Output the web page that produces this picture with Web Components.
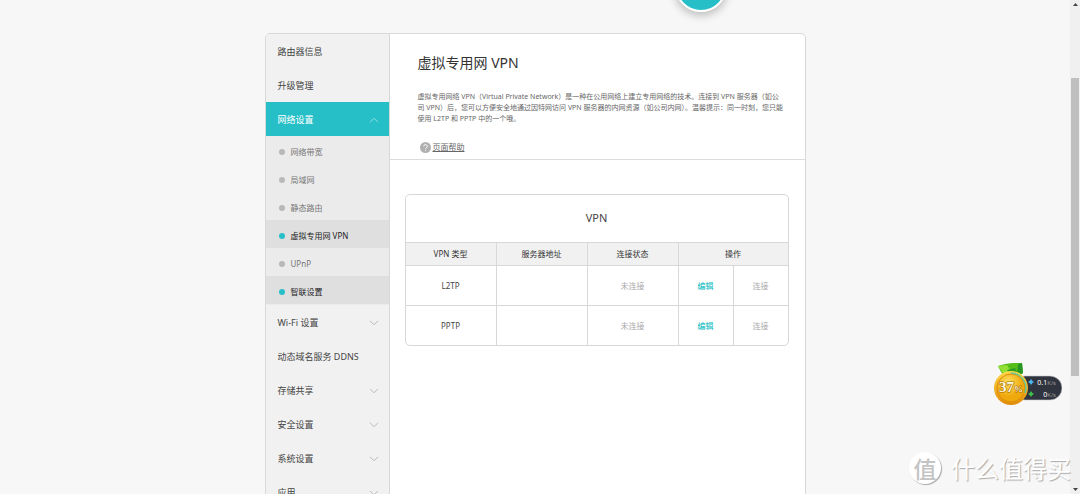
<!DOCTYPE html>
<html lang="zh-CN">
<head>
<meta charset="utf-8">
<title>虚拟专用网 VPN</title>
<style>
  html, body { margin: 0; height: 100%; overflow: hidden; }
  body { background: #f7f7f7; color: #444; font-family: "Noto Sans", "Noto Sans CJK SC", sans-serif; font-size: 9px; }
</style>
</head>
<body>
<router-app></router-app>
<script>
const define = (name, html) => {
  const template = document.createElement('template');
  template.innerHTML = html;
  customElements.define(name, class extends HTMLElement {
    connectedCallback() {
      if (this.shadowRoot) return;
      this.attachShadow({ mode: 'open' }).append(template.content.cloneNode(true));
    }
  });
};

define('nav-item', `
<style>
  :host { display: block; }
  a { display: flex; align-items: center; justify-content: space-between; box-sizing: border-box; height: 34px; padding: 2px 10px 0 12px; color: #444; text-decoration: none; font-size: 9px; line-height: 16px; }
  svg { display: none; width: 10px; height: 6px; fill: none; stroke: #bbb; }
  :host([expandable]) svg { display: block; }
  :host([open]) a { background: #27bfc7; color: #fff; }
  :host([open]) svg { transform: rotate(180deg); stroke: #8fdfe3; }
</style>
<a href="#"><slot></slot><svg viewBox="0 0 10 6"><path d="M1 .8 5 4.800 9 .8"/></svg></a>
`);

define('nav-subitem', `
<style>
  :host { display: block; --dot: #b9b9b9; }
  a { display: flex; align-items: center; gap: 6px; box-sizing: border-box; height: 28px; padding: 3px 0 0 13px; color: #777; text-decoration: none; font-size: 8px; line-height: 14px; }
  i { width: 6px; height: 6px; border-radius: 50%; background: var(--dot); }
  :host([marked]) { --dot: #27bfc7; background: #dfdfdf; }
  :host([marked]) a { color: #222; }
</style>
<a href="#"><i></i><span><slot></slot></span></a>
`);

define('side-nav', `
<style>
  :host { display: block; background: #f1f1f1; border-right: 1px solid #d8d8d8; }
  .sub { background: #ebebeb; padding-bottom: 1px; }
</style>
<nav aria-label="设置">
  <nav-item>路由器信息</nav-item>
  <nav-item>升级管理</nav-item>
  <nav-item expandable open>网络设置</nav-item>
  <div class="sub">
    <nav-subitem>网络带宽</nav-subitem>
    <nav-subitem>局域网</nav-subitem>
    <nav-subitem>静态路由</nav-subitem>
    <nav-subitem marked>虚拟专用网 VPN</nav-subitem>
    <nav-subitem>UPnP</nav-subitem>
    <nav-subitem marked>智联设置</nav-subitem>
  </div>
  <nav-item expandable>Wi-Fi 设置</nav-item>
  <nav-item>动态域名服务 DDNS</nav-item>
  <nav-item expandable>存储共享</nav-item>
  <nav-item expandable>安全设置</nav-item>
  <nav-item expandable>系统设置</nav-item>
  <nav-item expandable>应用</nav-item>
</nav>
`);

define('page-intro', `
<style>
  :host { display: block; padding: 18px 20px 5px 28px; border-bottom: 1px solid #dcdcdc; }
  h1 { margin: 0 0 17px; font-size: 14px; line-height: 22px; font-weight: 400; color: #333; }
  p { margin: 0 0 16px; font-size: 7px; line-height: 11px; color: #666; }
  a { display: flex; align-items: center; gap: 2px; padding-left: 2px; font-size: 8px; line-height: 14px; color: #666; }
  svg { width: 11px; height: 11px; }
</style>
<h1>虚拟专用网 VPN</h1>
<p>虚拟专用网络 VPN（Virtual Private Network）是一种在公用网络上建立专用网络的技术。连接到 VPN 服务器（如公<br>司 VPN）后，您可以方便安全地通过因特网访问 VPN 服务器的内网资源（如公司内网）。温馨提示：同一时刻，您只能<br>使用 L2TP 和 PPTP 中的一个哦。</p>
<a href="#"><svg viewBox="0 0 11 11"><circle cx="5.5" cy="5.5" r="5.5" fill="#b0b0b0"/><path d="M3.7 4.3a1.8 1.7 0 1 1 2.6 1.5q-.8.4-.8 1.2" fill="none" stroke="#fff" stroke-width=".9"/><circle cx="5.5" cy="8.5" r=".6" fill="#fff"/></svg><span>页面帮助</span></a>
`);

define('vpn-table', `
<style>
  :host { display: block; border: 1px solid #d8d8d8; border-radius: 5px; overflow: hidden; background: #fff; }
  table { width: 100%; table-layout: fixed; border-collapse: separate; border-spacing: 0; font-size: 8px; line-height: 12px; }
  caption { box-sizing: border-box; height: 47px; padding-bottom: 2px; line-height: 45px; font-size: 11px; color: #444; }
  .kind { width: 90px; }
  .wide { width: 91px; }
  .edit { width: 55px; }
  th, td { box-sizing: border-box; padding: 0; text-align: center; font-weight: 400; border-top: 1px solid #d8d8d8; border-left: 1px solid #d8d8d8; }
  th:first-child { border-left: 0; }
  thead th { height: 23px; background: #f1f1f1; color: #333; }
  tbody th, td { height: 40px; }
  td { color: #aaa; }
  button { padding: 0; border: 0; background: none; font: inherit; line-height: 12px; color: #aaa; }
  .go { color: #27bfc7; font-weight: 500; }
</style>
<table>
  <caption>VPN</caption>
  <colgroup><col class="kind"><col class="wide"><col class="wide"><col class="edit"><col></colgroup>
  <thead><tr><th scope="col">VPN 类型</th><th scope="col">服务器地址</th><th scope="col">连接状态</th><th scope="colgroup" colspan="2">操作</th></tr></thead>
  <tbody>
    <tr><th scope="row">L2TP</th><td></td><td>未连接</td><td><button class="go">编辑</button></td><td><button disabled>连接</button></td></tr>
    <tr><th scope="row">PPTP</th><td></td><td>未连接</td><td><button class="go">编辑</button></td><td><button disabled>连接</button></td></tr>
  </tbody>
</table>
`);

define('settings-card', `
<style>
  :host { display: grid; grid-template-columns: 124px minmax(0, 1fr); box-sizing: border-box; width: 100%; max-width: 541px; min-height: 100vh; border: 1px solid #d8d8d8; border-radius: 5px; overflow: hidden; background: #fff; }
  .body { padding: 34px 16px 0 15px; }
</style>
<slot name="nav"></slot>
<main><slot name="intro"></slot><div class="body"><slot></slot></div></main>
`);

define('top-badge', `
<style>
  :host { position: absolute; left: 50%; bottom: 100%; margin: 0 0 21px 140px; width: 48px; height: 48px; border: 2px solid #fff; border-radius: 50%; background: #27bfc7; box-shadow: 0 3px 10px #0004; box-sizing: content-box; }
</style>
`);

define('scroll-rail', `
<style>
  :host { display: flex; flex-direction: column; align-items: center; justify-content: space-between; background: #f0f0f0; position: relative; padding: 3px 0; box-sizing: border-box; }
  svg { width: 5px; height: 3px; fill: #444; }
  .down { transform: rotate(180deg); }
  i { position: absolute; left: 1px; right: 1px; top: 15.8%; height: 60.4%; background: #bfbfbf; }
</style>
<svg viewBox="0 0 5 3"><path d="M2.5 0 5 3H0z"/></svg><i></i><svg class="down" viewBox="0 0 5 3"><path d="M2.5 0 5 3H0z"/></svg>
`);

define('speed-widget', `
<style>
  :host { position: absolute; right: 18px; bottom: 85px; width: 69px; height: 46px; }
  svg { display: block; width: 69px; height: 46px; font-family: "Noto Sans", sans-serif; }
  .speed { font-size: 7px; fill: #fff; text-anchor: end; }
  .unit { font-size: 6px; fill: #999; }
  .load { font-family: "Liberation Serif", serif; font-weight: 700; font-size: 15px; fill: #fffbe0; stroke: #a66a00; stroke-width: 1.2; paint-order: stroke; text-anchor: middle; }
  .percent { font-size: 9px; }
</style>
<svg viewBox="0 0 69 46" role="img" aria-label="网速">
  <defs>
    <radialGradient id="gold" cx=".4" cy=".3"><stop offset="0" stop-color="#ffe063"/><stop offset="1" stop-color="#f0a90c"/></radialGradient>
    <linearGradient id="rim" x2="0" y2="1"><stop offset="0" stop-color="#ffd84a"/><stop offset="1" stop-color="#e18b08"/></linearGradient>
  </defs>
  <rect x="20" y="13" width="49" height="24" rx="12" fill="#30343f" stroke="#c9c9c9" stroke-width=".6"/>
  <path d="M5 3Q17-1 29 0l1 10-6 4H12L8 9z" fill="#55bd18"/>
  <path d="M5 3 14 2 21 13H12z" fill="#93df36"/><path d="m25 1 4-1 1 10-6 3z" fill="#279523"/><path d="m14 7 8-2 3 7-8 1z" fill="#2c9c23"/>
  <circle cx="18" cy="25" r="17" fill="url(#rim)"/>
  <circle cx="18" cy="25" r="14" fill="url(#gold)" stroke="#dc8d09"/>
  <path d="M18 10a15 15 0 0 1 14 20" fill="none" stroke="#65c996" stroke-width="1.5"/>
  <text class="load" x="18" y="29">37<tspan class="percent">%</tspan></text>
  <path d="m38 16 1.200 1.800 1.800 1.200-1.800 1.200L38 22l-1.200-1.800L35 19l1.800-1.200z" fill="#4ab5ef"/>
  <path d="m38 28 1.200 1.800 1.800 1.200-1.800 1.200L38 34l-1.200-1.800L35 31l1.800-1.200z" fill="#43bd4d"/>
  <text class="speed" x="63" y="22">0.1<tspan class="unit">K/s</tspan></text>
  <text class="speed" x="63" y="34">0<tspan class="unit">K/s</tspan></text>
</svg>
`);

define('site-watermark', `
<style>
  :host { position: absolute; right: 9px; bottom: 10px; display: flex; align-items: center; gap: 10px; color: #fff; font-family: "Noto Sans CJK SC", sans-serif; font-size: 24px; line-height: 32px; white-space: nowrap; text-shadow: 1px 1px 1px #aaa; }
  b { width: 32px; height: 32px; border-radius: 50%; background: #fff; box-shadow: 1px 1px 1px #aaa; color: #c4c4c4; font-size: 23px; font-weight: 500; text-align: center; text-shadow: none; }
</style>
<b>值</b><span>什么值得买</span>
`);

define('router-app', `
<style>
  :host { display: grid; grid-template-columns: minmax(0, 1fr) 10px; height: 100vh; overflow: hidden; position: relative; }
  .page { display: flex; justify-content: center; align-items: flex-start; padding-top: 33px; overflow: hidden; }
  .holder { position: relative; width: 100%; display: flex; justify-content: center; }
</style>
<div class="page"><div class="holder">
  <top-badge></top-badge>
  <settings-card><side-nav slot="nav"></side-nav><page-intro slot="intro"></page-intro><vpn-table></vpn-table></settings-card>
</div></div>
<scroll-rail></scroll-rail>
<speed-widget></speed-widget>
<site-watermark></site-watermark>
`);
</script>
</body>
</html>
